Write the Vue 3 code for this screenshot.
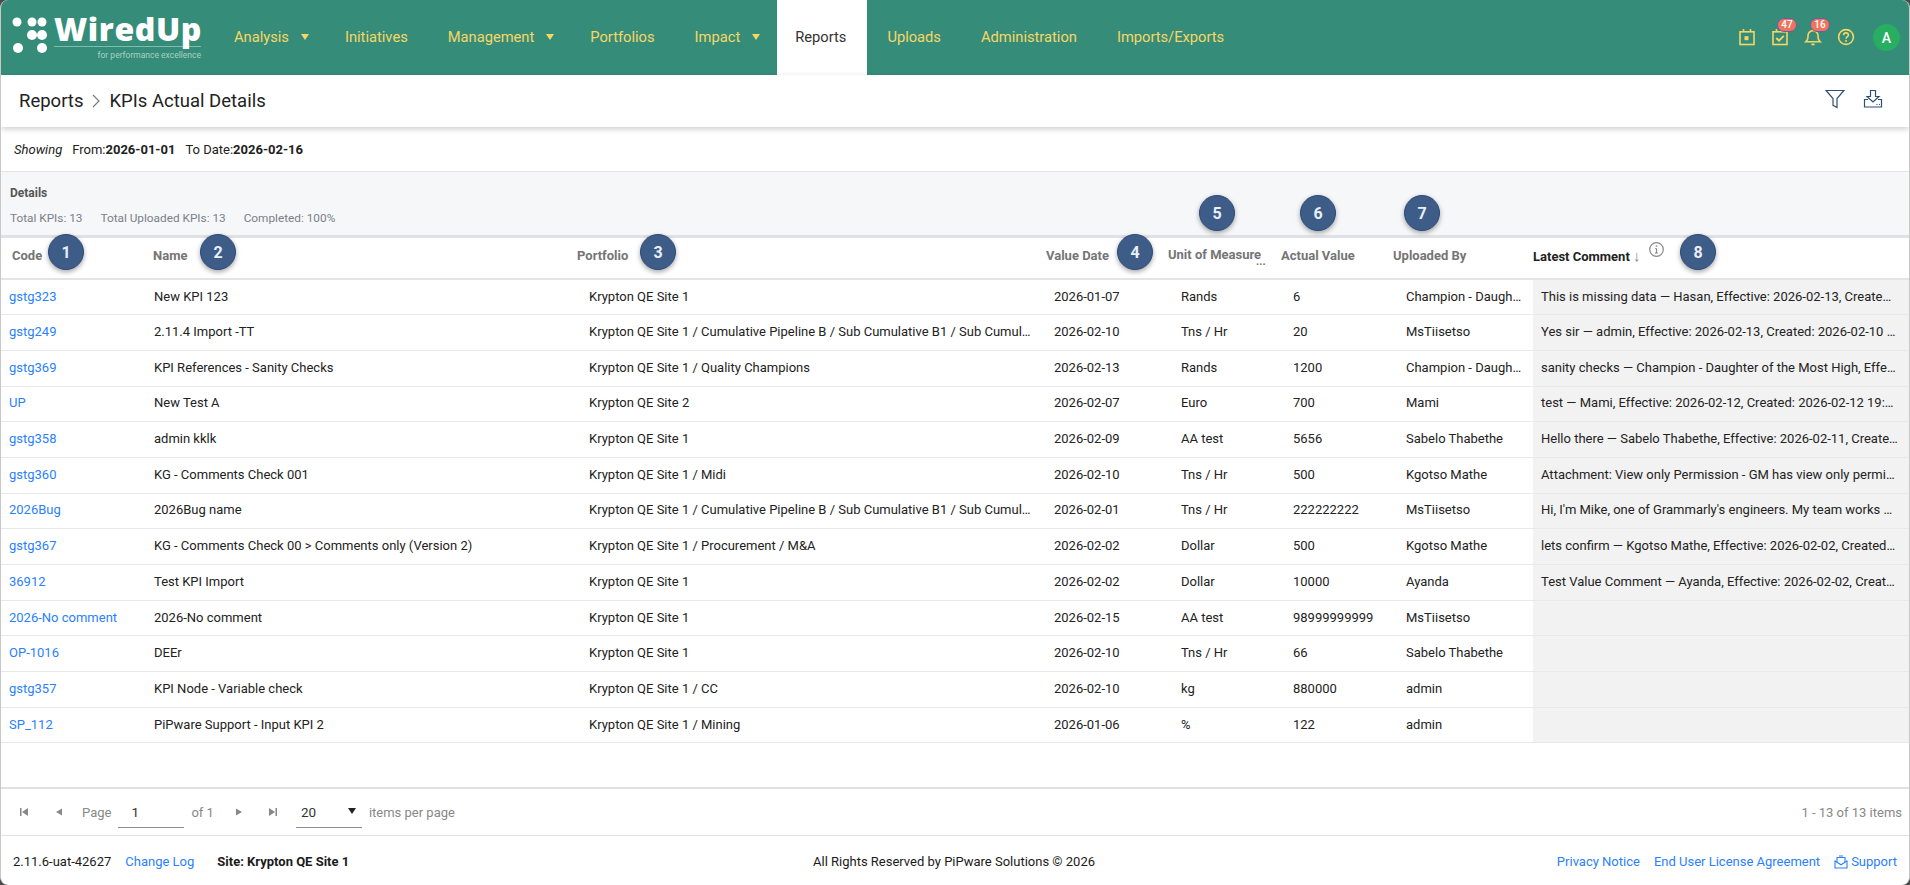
<script setup>
const nav = [
  { t: 'Analysis', caret: true },
  { t: 'Initiatives' },
  { t: 'Management', caret: true },
  { t: 'Portfolios' },
  { t: 'Impact', caret: true },
  { t: 'Reports', active: true },
  { t: 'Uploads' },
  { t: 'Administration' },
  { t: 'Imports/Exports' }
]
const dots = [[4,4,4.5],[19,4,4.5],[29,4,4.5],[19,17,5],[29,17,5],[5,30,5],[29,30,5]]
const K1 = 'Krypton QE Site 1'
const SUB = K1 + ' / Cumulative Pipeline B / Sub Cumulative B1 / Sub Cumulative B2 / Node'
const rows = [
  ['gstg323','New KPI 123',K1,'2026-01-07','Rands','6','Champion - Daughter of the Most High','This is missing data — Hasan, Effective: 2026-02-13, Created: 2026-02-13 10:22'],
  ['gstg249','2.11.4 Import -TT',SUB,'2026-02-10','Tns / Hr','20','MsTiisetso','Yes sir — admin, Effective: 2026-02-13, Created: 2026-02-10 14:21:08 by admin'],
  ['gstg369','KPI References - Sanity Checks',K1+' / Quality Champions','2026-02-13','Rands','1200','Champion - Daughter of the Most High','sanity checks — Champion - Daughter of the Most High, Effective: 2026-02-13'],
  ['UP','New Test A','Krypton QE Site 2','2026-02-07','Euro','700','Mami','test — Mami, Effective: 2026-02-12, Created: 2026-02-12 19:41:10 by Mami now'],
  ['gstg358','admin kklk',K1,'2026-02-09','AA test','5656','Sabelo Thabethe','Hello there — Sabelo Thabethe, Effective: 2026-02-11, Created: 2026-02-11 09:00'],
  ['gstg360','KG - Comments Check 001',K1+' / Midi','2026-02-10','Tns / Hr','500','Kgotso Mathe','Attachment: View only Permission - GM has view only permission on this item'],
  ['2026Bug','2026Bug name',SUB,'2026-02-01','Tns / Hr','222222222','MsTiisetso',"Hi, I'm Mike, one of Grammarly's engineers. My team works on the writing tools"],
  ['gstg367','KG - Comments Check 00 > Comments only (Version 2)',K1+' / Procurement / M&A','2026-02-02','Dollar','500','Kgotso Mathe','lets confirm — Kgotso Mathe, Effective: 2026-02-02, Created: 2026-02-02 08:14'],
  ['36912','Test KPI Import',K1,'2026-02-02','Dollar','10000','Ayanda','Test Value Comment — Ayanda, Effective: 2026-02-02, Created: 2026-02-02 11:10'],
  ['2026-No comment','2026-No comment',K1,'2026-02-15','AA test','98999999999','MsTiisetso',''],
  ['OP-1016','DEEr',K1,'2026-02-10','Tns / Hr','66','Sabelo Thabethe',''],
  ['gstg357','KPI Node - Variable check',K1+' / CC','2026-02-10','kg','880000','admin',''],
  ['SP_112','PiPware Support - Input KPI 2',K1+' / Mining','2026-01-06','%','122','admin','']
]
const marks = [[1,66,14],[2,218,14],[3,658,14],[4,1135,14],[5,1217,-25],[6,1318,-25],[7,1422,-25],[8,1698,14]]
</script>

<template>
  <div class="page">
    <header class="nav">
      <div class="logo">
        <svg class="dots" width="36" height="36" viewBox="0 0 36 36"><circle v-for="(d,i) in dots" :key="i" :cx="d[0]" :cy="d[1]" :r="d[2]" fill="#fff"/></svg>
        <div class="brand">
          <div class="word">WiredUp</div>
          <div class="tag">for performance excellence</div>
        </div>
      </div>
      <nav class="menu">
        <a v-for="n in nav" :key="n.t" class="item" :class="{ active: n.active }">{{ n.t }}<i v-if="n.caret" class="caret"></i></a>
      </nav>
      <div class="tools">
        <span class="tool">
          <svg width="18" height="18" viewBox="0 0 18 18" fill="none" stroke="#f6d565" stroke-width="1.6"><rect x="2" y="3.800" width="14" height="12.700" /><path d="M5.500 1v3M12.500 1v3"/><rect x="6.500" y="8.200" width="4" height="4" fill="#f6d565" stroke="none"/></svg>
        </span>
        <span class="tool">
          <svg width="18" height="18" viewBox="0 0 18 18" fill="none" stroke="#f6d565" stroke-width="1.6"><rect x="2" y="3.800" width="14" height="12.700"/><path d="M5.500 1v3M12.500 1v3"/><path d="M5.300 10l2.700 2.700 4.800-4.800" stroke-width="1.900"/></svg>
          <b class="badge">47</b>
        </span>
        <span class="tool">
          <svg width="18" height="18" viewBox="0 0 18 18" fill="none" stroke="#f6d565" stroke-width="1.6"><path d="M1.800 13.800h14.400c-1.500-1.200-2.200-2.500-2.200-4.800V7.600A5 5 0 0 0 4 7.600V9c0 2.300-.7 3.600-2.200 4.800z"/><path d="M7.400 16.400h3.200"/><path d="M9 .8v1.800"/></svg>
          <b class="badge">16</b>
        </span>
        <span class="tool">
          <svg width="18" height="18" viewBox="0 0 18 18" fill="none" stroke="#f6d565" stroke-width="1.6"><circle cx="9" cy="9" r="7.400"/><path d="M6.600 7.200c0-1.500 1.100-2.300 2.400-2.300s2.400.8 2.400 2.100c0 1.900-2.400 1.900-2.400 3.700"/><path d="M9 12v1.700"/></svg>
        </span>
        <span class="avatar">A</span>
      </div>
    </header>

    <div class="title">
      <div class="crumbs">
        <span>Reports</span>
        <svg width="10" height="16" viewBox="0 0 10 16" fill="none" stroke="#777" stroke-width="1.1"><path d="M2 2l6 6-6 6"/></svg>
        <span>KPIs Actual Details</span>
      </div>
      <div class="acts">
        <svg width="20" height="20" viewBox="0 0 20 20" fill="none" stroke="#2f4f6f" stroke-width="1.2"><path d="M1 1.500h18l-7 8v9l-4-2.200V9.500z"/></svg>
        <svg width="20" height="20" viewBox="0 0 20 20" fill="none" stroke="#2f4f6f" stroke-width="1.2"><path d="M7.500 1.500h5v6H16L10 13 4 7.500h3.500z"/><path d="M5 10.500H1.500v7.500h17v-7.500H15"/><path d="M13.500 15.500h1M16 15.500h1"/></svg>
      </div>
    </div>

    <div class="showing">
      <em>Showing</em>
      <span>From:<b>2026-01-01</b></span>
      <span>To Date:<b>2026-02-16</b></span>
    </div>

    <section class="details">
      <h4>Details</h4>
      <div class="stats">
        <span>Total KPIs: 13</span>
        <span>Total Uploaded KPIs: 13</span>
        <span>Completed: 100%</span>
      </div>
    </section>

    <main class="grid-wrap">
      <table class="grid">
        <colgroup>
          <col class="c1"><col class="c2"><col class="c3"><col class="c4"><col class="c5"><col class="c6"><col class="c7"><col class="c8">
        </colgroup>
        <thead>
          <tr>
            <th class="h-code">Code</th>
            <th>Name</th>
            <th class="h-port">Portfolio</th>
            <th>Value Date</th>
            <th class="h-uom"><span class="uom">Unit of Measure</span><span class="more">...</span></th>
            <th>Actual Value</th>
            <th class="h-by">Uploaded By</th>
            <th class="h-last">Latest Comment <span class="down">↓</span>
              <svg class="info" width="15" height="15" viewBox="0 0 15 15" fill="none" stroke="#888" stroke-width="1.200"><circle cx="7.500" cy="7.500" r="6.800"/><path d="M7.500 6.500v4.500M6 11h3M6.200 6.500h1.300"/><path d="M7.500 3.400v1.400" stroke-width="1.500"/></svg>
            </th>
          </tr>
        </thead>
        <tbody>
          <tr v-for="r in rows" :key="r[0]">
            <td class="code"><a>{{ r[0] }}</a></td>
            <td class="name">{{ r[1] }}</td>
            <td class="port">{{ r[2] }}</td>
            <td class="date">{{ r[3] }}</td>
            <td class="uomc">{{ r[4] }}</td>
            <td class="val">{{ r[5] }}</td>
            <td class="by">{{ r[6] }}</td>
            <td class="last">{{ r[7] }}</td>
          </tr>
        </tbody>
      </table>
      <span v-for="m in marks" :key="m[0]" class="mark" :style="{ left: m[1] - 19 + 'px', top: m[2] - 18 + 'px' }">{{ m[0] }}</span>
    </main>

    <div class="pager">
      <div class="pg-left">
        <svg class="pi p1" width="8" height="10" viewBox="0 0 8 10" fill="#888"><rect x="0" y="1" width="1.500" height="8"/><path d="M8 1v8L2 5z"/></svg>
        <svg class="pi p2" width="7" height="10" viewBox="0 0 7 10" fill="#888"><path d="M7 1.500v7L1 5z"/></svg>
        <span class="lbl">Page</span>
        <span class="box pgnum">1</span>
        <span class="lbl">of 1</span>
        <svg class="pi p3" width="7" height="10" viewBox="0 0 7 10" fill="#888"><path d="M0 1.500v7L6 5z"/></svg>
        <svg class="pi p4" width="8" height="10" viewBox="0 0 8 10" fill="#888"><path d="M0 1v8l6-4z"/><rect x="6.500" y="1" width="1.500" height="8"/></svg>
        <span class="box sel">20<i></i></span>
        <span class="lbl">items per page</span>
      </div>
      <span class="lbl">1 - 13 of 13 items</span>
    </div>

    <footer class="foot">
      <div class="f-left">
        <span>2.11.6-uat-42627</span>
        <a>Change Log</a>
        <b>Site: Krypton QE Site 1</b>
      </div>
      <div class="f-mid">All Rights Reserved by PiPware Solutions © 2026</div>
      <div class="f-right">
        <a>Privacy Notice</a>
        <a>End User License Agreement</a>
        <a class="sup">
          <svg width="14" height="14" viewBox="0 0 14 14" fill="none" stroke="#2a7fff" stroke-width="1.100"><path d="M1 5.500V13h12V5.500"/><path d="M1 6l6 3.800L13 6"/><path d="M3 7V2.500h8V7"/><path d="M5 1h4"/></svg>
          Support
        </a>
      </div>
    </footer>
  </div>
</template>

<style>
html, body { margin: 0; background: #4a4a4a; overflow: hidden; }
</style>

<style scoped>
.page {
  width: 1910px; height: 885px; box-sizing: border-box; display: flex; flex-direction: column;
  background: #fff; border-radius: 8px; overflow: hidden;
  font-family: Roboto, "Liberation Sans", sans-serif; font-size: 13px; color: #212121;
  border-left: 1px solid #c8c8c8; border-right: 1px solid #c8c8c8;
}
.nav { height: 75px; flex: none; display: flex; align-items: stretch; background: #358d79; }
.logo { width: 213px; flex: none; padding: 14px 0 0 12px; box-sizing: border-box; display: flex; gap: 5px; color: #fff; }
.dots { margin-top: 4px; overflow: visible; }
.brand { width: 147px; }
.word { font: 800 32px/30px "Open Sans", sans-serif; letter-spacing: 0.6px; border-bottom: 1px solid #7fbcaa; height: 32px; white-space: nowrap; }
.tag { font: 400 8.500px/17px Roboto, sans-serif; text-align: right; color: #a9d0c3; white-space: nowrap; }
.menu { display: flex; }
.item { display: flex; align-items: center; padding: 0 20px 2px; font-size: 14.700px; color: #f7d665; height: 75px; box-sizing: border-box; }
.item.active { background: #fff; color: #333; padding: 0 21px 2px 18px; margin-left: 1px; }
.caret { width: 0; height: 0; margin: 0 -4px 0 12px; border-left: 4px solid transparent; border-right: 4px solid transparent; border-top: 6px solid #f7d665; }
.tools { margin-left: auto; display: flex; align-items: center; gap: 15px; padding-right: 9px; }
.tool { position: relative; display: block; width: 18px; height: 18px; margin-top: -1px; }
.badge { position: absolute; left: 6px; top: -10px; height: 14px; width: 20px; box-sizing: border-box; border-radius: 7px; background: #f0745a; border: 1px solid #6a5cb0; color: #fff; font: 500 10px/12px Roboto, sans-serif; text-align: center; }
.avatar { width: 27px; height: 27px; border-radius: 50%; background: #27ae60; color: #fff; font-size: 14px; font-weight: 500; display: flex; align-items: center; justify-content: center; margin-left: 3px; }
.title { height: 52px; flex: none; display: flex; align-items: center; justify-content: space-between; padding: 0 26px 0 18px; box-shadow: 0 2px 6px rgba(0,0,0,.2); position: relative; z-index: 2; background: #fff; }
.crumbs { display: flex; align-items: center; gap: 8px; font-size: 18.500px; color: #222; }
.acts { display: flex; gap: 18px; margin-bottom: 4px; }
.showing { height: 45px; flex: none; display: flex; align-items: center; gap: 10px; padding-left: 13px; font-size: 13px; box-sizing: border-box; border-bottom: 1px solid #e2e3e6; }
.showing b { font-weight: 700; }
.details { height: 66px; flex: none; box-sizing: border-box; background: #f6f7f9; padding: 13px 9px 0; border-bottom: 3px solid #dfe1e6; color: #6b7280; }
.details h4 { margin: 0; font-size: 12px; line-height: 16px; font-weight: 700; color: #555; }
.stats { display: flex; gap: 18px; font-size: 11.800px; margin-top: 9px; line-height: 16px; color: #7a8088; }
.grid-wrap { position: relative; flex: 1; min-height: 0; }
.grid { width: 1908px; border-collapse: collapse; table-layout: fixed; }
.c1 { width: 141px; } .c2 { width: 424px; } .c3 { width: 480px; } .c4 { width: 122px; }
.c5 { width: 113px; } .c6 { width: 113px; } .c7 { width: 139px; } .c8 { width: 376px; }
th { height: 41px; box-sizing: border-box; padding: 0 0 5px; text-align: left; font-size: 13px; font-weight: 700; color: #757575; border-bottom: 2px solid #e3e4e8; white-space: nowrap; }
td { height: 35.700px; box-sizing: border-box; padding: 0 12px 2px 0; border-bottom: 1px solid #e8e9ec; white-space: nowrap; overflow: hidden; text-overflow: ellipsis; color: #222; }
.h-code { padding-left: 11px; }
th:nth-child(2) { padding-left: 11px; }
.h-port { padding-left: 11px; }
.h-uom { position: relative; }
.uom { display: inline-block; width: 96px; overflow: hidden; }
.more { position: absolute; left: 88px; top: 18px; font-size: 11px; line-height: 12px; }
.h-by { text-indent: -1px; }
.h-last { color: #222; position: relative; }
.down { color: #888; font-weight: 400; font-size: 15px; }
.info { position: absolute; left: 116px; top: 4px; }
.code { padding-left: 8px; }
.code a { color: #2a7fff; }
.name { padding-left: 12px; }
.port { padding-left: 23px; }
.date { padding-left: 8px; }
.uomc { padding-left: 13px; }
.val { padding-left: 12px; }
.by { padding-left: 12px; padding-right: 9px; }
.last { padding-left: 8px; background: #f2f2f2; padding-right: 11px; }
.mark { position: absolute; width: 36px; height: 36px; box-sizing: border-box; border-radius: 50%; background: #3e5c88; border: 1px solid #2e4a78; color: #eaeff6; font-size: 16px; font-weight: 700; display: flex; align-items: center; justify-content: center; box-shadow: 0 2px 5px rgba(0,0,0,.35); }
.pager { height: 49px; flex: none; box-sizing: border-box; display: flex; align-items: center; justify-content: space-between; padding: 0 7px 0 19px; border-top: 2px solid #dfe1e6; border-bottom: 1px solid #e2e3e6; }
.pg-left { display: flex; align-items: center; }
.lbl { font-size: 13px; color: #888; }
.pi { flex: none; }
.p1 { margin-right: 27px; }
.p2 { margin-right: 20px; }
.box { box-sizing: border-box; height: 31px; width: 66px; border-bottom: 1px solid #8f8f8f; font-size: 13.500px; color: #333; display: flex; align-items: center; position: relative; }
.pgnum { padding-left: 13px; margin: 0 7px; }
.p3 { margin: 0 26px 0 22px; }
.p4 { margin-right: 19px; }
.sel { padding-left: 5px; margin-right: 7px; }
.sel i { position: absolute; left: 52px; top: 11px; width: 0; height: 0; border-left: 4px solid transparent; border-right: 4px solid transparent; border-top: 6px solid #222; }
.foot { height: 47px; flex: none; display: grid; grid-template-columns: 1fr auto 1fr; align-items: center; padding: 2px 12px 0; font-size: 13px; color: #1b1b1b; }
.foot a { color: #2a7fff; }
.f-left { display: flex; gap: 14px; }
.f-left b { margin-left: 9px; font-weight: 700; }
.f-mid { text-align: center; transform: translateX(-1px); }
.f-right { display: flex; justify-content: flex-end; gap: 14px; }
.sup { display: flex; align-items: center; gap: 3px; }
</style>
